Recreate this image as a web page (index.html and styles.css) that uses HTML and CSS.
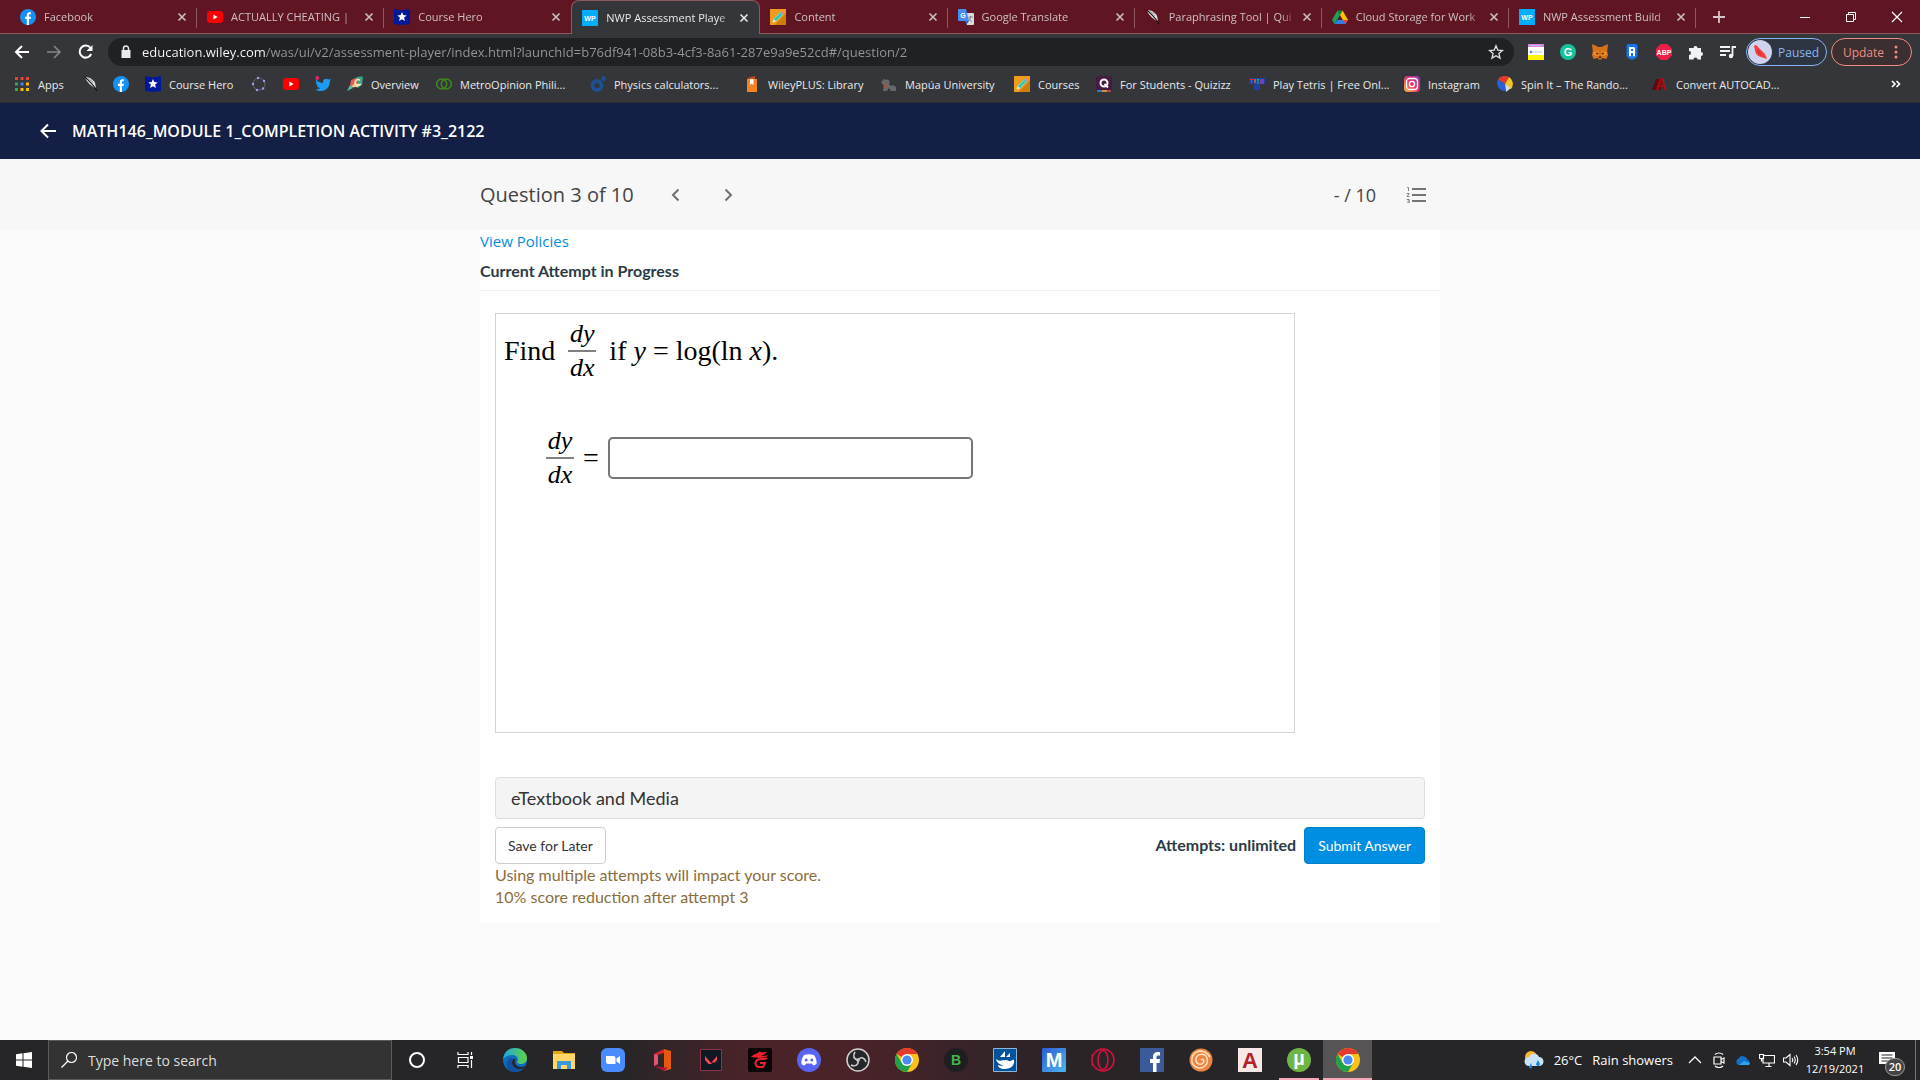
FILE: index.html
```html
<!DOCTYPE html>
<html lang="en">
<head>
  <meta charset="UTF-8">
  <title>NWP Assessment Player</title>
  <link rel="stylesheet" href="styles.css">
</head>
<body>
<svg class="defs" aria-hidden="true">
  <symbol id="fb" viewBox="0 0 16 16"><circle cx="8" cy="8" r="8" fill="#1590f5"/><path d="M6.800 16V10H5V7.800h1.800V6.200C6.800 4.200 7.900 3.200 9.600 3.200c.7 0 1.300.1 1.300.1v1.900h-.9c-.9 0-1.100.5-1.100 1.100v1.500h2L10.600 10H8.900v6z" fill="#fff"/></symbol>
  <symbol id="yt" viewBox="0 0 16 16"><rect y="2" width="16" height="12" rx="3" fill="#f00"/><path d="M6.400 5.600v4.800L10.600 8z" fill="#fff"/></symbol>
  <symbol id="hero" viewBox="0 0 16 16"><path d="M0 0l8 1.500L16 0v15l-8 1-8-1z" fill="#00189a"/><path d="M8 3l1.300 3.100 3.400.3-2.600 2.200.8 3.300L8 10.200l-2.900 1.700.8-3.300-2.600-2.200 3.400-.3z" fill="#fff"/></symbol>
  <symbol id="wp" viewBox="0 0 16 16"><path d="M0 0h16v16H0z" fill="#00aeff"/><text x="8" y="11" class="glyph wp">WP</text></symbol>
  <symbol id="pencil" viewBox="0 0 16 16"><path d="M0 0h16v16H0z" fill="#f29a1c"/><path d="M16 4v12H5z" fill="#cf7d0d"/><path d="M2.500 13.500l1-3.700 7-7 2.700 2.700-7 7z" fill="#58d6c4"/><path d="M4.500 11.500l7-7" stroke="#2aa58f"/><path d="M10.500 2.800l1.200-1.100 2.700 2.600-1.200 1.200z" fill="#f27aa5"/><path d="M2.500 13.500l1-3.500 2.600 2.500z" fill="#ffe6b0"/></symbol>
  <symbol id="translate" viewBox="0 0 16 16"><path d="M6 4h9a1 1 0 0 1 1 1v10a1 1 0 0 1-1 1H9z" fill="#dcdcdc"/><path d="M1 0h7l3 12H1a1 1 0 0 1-1-1V1a1 1 0 0 1 1-1z" fill="#4a8af4"/><path d="M7 12h4l-2.500 3.500z" fill="#2b5fc7"/><text x="5" y="8.500" class="glyph wp">G</text><path d="M10.500 8H15M12.500 7v1c0 2-1 3.500-2 4m0-3c1 2 2 3 3.500 3.500" stroke="#6b7785" fill="none" stroke-width=".8"/></symbol>
  <symbol id="quill" viewBox="0 0 16 16"><path d="M2 1c4 0 8 2 10 6l1 5-2-.5C7 9 3 5 2 1z" fill="#e8e8e8"/><path d="M2 1c4 4 9 8 12 14" stroke="#111" stroke-width="1.200" fill="none"/><path d="M5 2l3 3M8 3l2 4" stroke="#777" stroke-width=".6"/></symbol>
  <symbol id="drive" viewBox="0 0 16 16"><path d="M5.400 1.500h5.200L8 6z" fill="#0a8a3e"/><path d="M5.400 1.500L0 11l2.600 4L8 6z" fill="#12a65a"/><path d="M10.600 1.500L16 11h-5.200L8 6z" fill="#ffc107"/><path d="M5.300 11H16l-2.600 4H2.600z" fill="#2d7ff0"/><path d="M10.800 11H16l-2.600 4z" fill="#ea4335"/></symbol>
  <symbol id="close" viewBox="0 0 16 16"><path d="M4.500 4.500l7 7m0-7l-7 7" stroke="currentColor" stroke-width="1.600"/></symbol>
  <symbol id="chrome" viewBox="0 0 24 24"><circle cx="12" cy="12" r="12" fill="#fbc116"/><path d="M12 12L1.600 6A12 12 0 0 1 22.400 6H12z" fill="#e33b2e"/><path d="M1.600 6A12 12 0 0 0 12 24l5.200-9L12 12 6.800 15z" fill="#1fa04b"/><circle cx="12" cy="12" r="6" fill="#fff"/><circle cx="12" cy="12" r="4.600" fill="#4a8af4"/></symbol>
</svg>

<header class="browser">
  <div class="tabstrip">
    <div class="tab"><svg><use href="#fb"/></svg><span>Facebook</span><button aria-label="Close"><svg><use href="#close"/></svg></button></div>
    <div class="tab"><svg><use href="#yt"/></svg><span>ACTUALLY CHEATING |</span><button aria-label="Close"><svg><use href="#close"/></svg></button></div>
    <div class="tab"><svg><use href="#hero"/></svg><span>Course Hero</span><button aria-label="Close"><svg><use href="#close"/></svg></button></div>
    <div class="tab active"><svg><use href="#wp"/></svg><span>NWP Assessment Playe</span><button aria-label="Close"><svg><use href="#close"/></svg></button></div>
    <div class="tab"><svg><use href="#pencil"/></svg><span>Content</span><button aria-label="Close"><svg><use href="#close"/></svg></button></div>
    <div class="tab"><svg><use href="#translate"/></svg><span>Google Translate</span><button aria-label="Close"><svg><use href="#close"/></svg></button></div>
    <div class="tab"><svg><use href="#quill"/></svg><span>Paraphrasing Tool | Qui</span><button aria-label="Close"><svg><use href="#close"/></svg></button></div>
    <div class="tab"><svg><use href="#drive"/></svg><span>Cloud Storage for Work</span><button aria-label="Close"><svg><use href="#close"/></svg></button></div>
    <div class="tab"><svg><use href="#wp"/></svg><span>NWP Assessment Build</span><button aria-label="Close"><svg><use href="#close"/></svg></button></div>
    <div class="window-buttons">
      <button aria-label="New tab"><svg viewBox="0 0 16 16"><path d="M8 2v12M2 8h12" stroke="#d5c5c8" stroke-width="1.800"/></svg></button>
      <button aria-label="Minimize"><svg viewBox="0 0 16 16"><path d="M3 8.500h10" stroke="#fff"/></svg></button>
      <button aria-label="Restore"><svg viewBox="0 0 16 16"><path d="M3.500 5.500h7v7h-7zM5.500 5V3.500h7v7H11" fill="none" stroke="#fff"/></svg></button>
      <button aria-label="Close window"><svg viewBox="0 0 16 16"><path d="M3 3l10 10M13 3L3 13" stroke="#fff" stroke-width="1.200"/></svg></button>
    </div>
  </div>

  <div class="toolbar">
    <nav class="history">
      <button aria-label="Back"><svg viewBox="0 0 16 16"><path d="M15 8H2M8 2L2 8l6 6" fill="none" stroke="#fff" stroke-width="2"/></svg></button>
      <button aria-label="Forward"><svg viewBox="0 0 16 16"><path d="M1 8h13M8 2l6 6-6 6" fill="none" stroke="#85868a" stroke-width="1.600"/></svg></button>
      <button aria-label="Reload"><svg viewBox="0 0 16 16"><path d="M13.200 10A6 6 0 1 1 12.500 4" fill="none" stroke="#fff" stroke-width="2"/><path d="M14.500 1v6h-6z" fill="#fff"/></svg></button>
    </nav>
    <div class="omnibox">
      <svg class="lock" viewBox="0 0 16 16"><path d="M3.500 6h9v8h-9z" fill="#e8eaed"/><path d="M5.500 6V4.500a2.500 2.500 0 0 1 5 0V6" fill="none" stroke="#e8eaed" stroke-width="1.500"/></svg>
      <input type="text" aria-label="Address" value="education.wiley.com/was/ui/v2/assessment-player/index.html?launchId=b76df941-08b3-4cf3-8a61-287e9a9e52cd#/question/2">
      <button aria-label="Bookmark"><svg viewBox="0 0 16 16"><path d="M8 1.800l1.800 4.300 4.600.4-3.500 3 1.100 4.600L8 11.700l-4 2.400 1.100-4.600-3.500-3 4.600-.4z" fill="none" stroke="#dfe1e5" stroke-width="1.300"/></svg></button>
    </div>
    <div class="extensions">
      <button aria-label="Notes"><svg viewBox="0 0 16 16"><path d="M0 0h16v4H0z" fill="#d883dc"/><path d="M0 3h16v8H0z" fill="#fff"/><path d="M0 11h16v5H0z" fill="#fbf600"/><path d="M2 1.500h11M5 8h9" stroke="#b9c6e8"/><circle cx="3" cy="8" r="1.300" fill="#5a86dc"/></svg></button>
      <button aria-label="Grammarly"><svg viewBox="0 0 16 16"><circle cx="8" cy="8" r="8" fill="#15c39a"/><text x="8" y="12" class="glyph g">G</text></svg></button>
      <button aria-label="MetaMask"><svg viewBox="0 0 16 16"><path d="M0 0l6.500 3h3L16 0l-.8 7.500L16 11l-1.600 4-3.900-1-1.500 1.500H7L5.500 14l-3.900 1L0 11l.8-3.500z" fill="#d9731a"/><path d="M1 8l5-1 1 5-5.500-1zm14 0l-5-1-1 5 5.500-1z" fill="#f08a2c"/><path d="M4.500 8.500l2 1-.5 1-2-.5zm7 0l-2 1 .5 1 2-.5zM6.500 12.500h3L9 14H7z" fill="#3b2513"/></svg></button>
      <button aria-label="Ronin"><svg viewBox="0 0 16 16"><path d="M4 0h8l1.500 1.500v10C13.500 13.500 10 15 8 16c-2-1-5.500-2.500-5.500-4.500v-10z" fill="#1573f0"/><path d="M5 3h5l1 1v8l-2 .5V9H7v3.500L5 12zM7 5v2h2V5z" fill="#fff" fill-rule="evenodd"/></svg></button>
      <button aria-label="Adblock Plus"><svg viewBox="0 0 16 16"><path d="M4.700 0h6.600L16 4.700v6.600L11.300 16H4.700L0 11.300V4.700z" fill="#ed1e45"/><text x="8" y="10.500" class="glyph wp">ABP</text></svg></button>
      <button aria-label="Extensions"><svg viewBox="0 0 16 16"><path d="M1 4h4.500a2 2 0 1 1 4 0H13v4a2 2 0 1 1 0 4v3.500H9.500a2 2 0 0 0-4 0H1V11a2 2 0 0 0 0-4z" fill="#f1f3f4"/></svg></button>
      <button aria-label="Media"><svg viewBox="0 0 16 16"><path d="M0 3h10M0 7h10M0 11h6M12.500 12V3H16" fill="none" stroke="#f1f3f4" stroke-width="1.800"/><circle cx="11" cy="12" r="2.200" fill="#f1f3f4"/></svg></button>
    </div>
    <button class="pill paused"><svg viewBox="0 0 24 24"><circle cx="12" cy="12" r="12" fill="#cfd3ee"/><path d="M6 6c1-1 3-1 4 1l7 7 2 5-6-2c-4-1-6-4-6-7z" fill="#f3403f"/><path d="M9 9l6 7-5-3z" fill="#c72f3d"/></svg>Paused</button>
    <button class="pill update">Update<svg viewBox="0 0 16 16"><g fill="#f28b82"><circle cx="8" cy="3" r="1.500"/><circle cx="8" cy="8" r="1.500"/><circle cx="8" cy="13" r="1.500"/></g></svg></button>
  </div>

  <nav class="bookmarks">
    <a href="#"><svg viewBox="0 0 16 16"><path d="M1 1h3v3H1zm5.500 0h3v3h-3zM12 1h3v3h-3z" fill="#ea4335"/><path d="M1 6.500h3v3H1zM1 12h3v3H1z" fill="#34a853"/><path d="M6.500 6.500h3v3h-3z" fill="#4285f4"/><path d="M12 6.500h3v3h-3zM6.500 12h3v3h-3zM12 12h3v3h-3z" fill="#fbbc05"/></svg>Apps</a>
    <a href="#" aria-label="QuillBot"><svg><use href="#quill"/></svg></a>
    <a href="#" aria-label="Facebook"><svg><use href="#fb"/></svg></a>
    <a href="#"><svg><use href="#hero"/></svg>Course Hero</a>
    <a href="#" aria-label="GeoGebra"><svg viewBox="0 0 16 16"><circle cx="8" cy="8" r="6" fill="none" stroke="#666" stroke-width="1"/><g fill="#9a9aff"><circle cx="7" cy="2" r="1.200"/><circle cx="13" cy="5" r="1.200"/><circle cx="12" cy="12.500" r="1.200"/><circle cx="6" cy="14" r="1.200"/><circle cx="2" cy="8" r="1.200"/></g></svg></a>
    <a href="#" aria-label="YouTube"><svg><use href="#yt"/></svg></a>
    <a href="#" aria-label="Twitter"><svg viewBox="0 0 16 16"><path d="M1 3.500c2 2.300 4.200 3.300 7 3.500-.4-2.500 1-4.300 3.200-4.300 1 0 1.700.3 2.300.9L16 3l-1.100 2C15 10.500 11.500 15 6 15c-2.200 0-4-.5-5.500-1.600 2 .1 3.600-.3 4.600-1.300-1.600-.2-2.700-1-3.100-2.300h1.300C1.700 9 .9 8 1 6.200l1.300.4C1 5.600.5 4.800 1 3.500z" fill="#1d9bf0"/><circle cx="2.200" cy="2" r="2" fill="#f02070"/></svg></a>
    <a href="#"><svg viewBox="0 0 16 16"><path d="M7 3c2-2 6-3 9-2l-1 8-4 3-5-2z" fill="#3ba386"/><path d="M3 10l1-6 5-2 2 4-4 6z" fill="#e95c50"/><path d="M0 15l3-6 3 3z" fill="#4cc0a0"/><path d="M4 11l4-4 3 4z" fill="#f0cf8d"/><path d="M13 4.500a2.800 2.800 0 1 0 0 4H10.500" fill="none" stroke="#ffe9b8" stroke-width="1.500"/></svg>Overview</a>
    <a href="#"><svg viewBox="0 0 16 16"><g fill="none" stroke="#3f8a1c" stroke-width="1.500"><circle cx="5.700" cy="8" r="5"/><circle cx="10.300" cy="8" r="5"/></g></svg>MetroOpinion Phili...</a>
    <a href="#"><svg viewBox="0 0 16 16"><circle cx="7" cy="9.500" r="4.500" fill="none" stroke="#1d4f91" stroke-width="4"/><circle cx="13.500" cy="2.500" r="2.500" fill="#1d4f91"/></svg>Physics calculators...</a>
    <a href="#"><svg viewBox="0 0 16 16"><path d="M3 3h10v13H3z" fill="#f58220"/><path d="M4 2l7-2v3H4z" fill="#d94a1f"/><path d="M6 3h3.500v6L7.700 7.500 6 9z" fill="#fff"/></svg>WileyPLUS: Library</a>
    <a href="#"><svg viewBox="0 0 16 16"><path d="M0 6l3-3 3 1 1-1 2 3-1 2 2 2 2-1 3 2v4h-5l-2-3-2 3H2l1-5z" fill="#65696b"/><path d="M2 6l2 1-1 5M7 6l-2 6" stroke="#a15842" fill="none"/></svg>Mapúa University</a>
    <a href="#"><svg><use href="#pencil"/></svg>Courses</a>
    <a href="#"><svg viewBox="0 0 16 16"><rect width="16" height="16" rx="3" fill="#461a42"/><circle cx="8" cy="7" r="3.500" fill="none" stroke="#fff" stroke-width="2"/><path d="M8.500 8l3.500 3.500" stroke="#fff" stroke-width="1.800"/><path d="M1 15h5" stroke="#25a0e0" stroke-width="1.500"/><path d="M6 15h5" stroke="#f4c13a" stroke-width="1.500"/><path d="M11 15h4" stroke="#e84a5f" stroke-width="1.500"/></svg>For Students - Quizizz</a>
    <a href="#"><svg viewBox="0 0 16 16"><path d="M0 2h16v6h-5v6H5V8H0z" fill="#22409c"/><path d="M1 3.500h3M2.500 3.500v4" stroke="#f22"/><path d="M5 4h2M5 6h2" stroke="#f90"/><path d="M8 3.500h2M9 4v4" stroke="#2c4"/><path d="M12 3v5M14 3v5" stroke="#b4e"/></svg>Play Tetris | Free Onl...</a>
    <a href="#"><svg viewBox="0 0 16 16"><defs><linearGradient id="ig" x1="0" y1="1" x2="1" y2="0"><stop offset="0" stop-color="#fdc23f"/><stop offset=".5" stop-color="#e9306b"/><stop offset="1" stop-color="#8a3ac8"/></linearGradient></defs><rect width="16" height="16" rx="4" fill="url(#ig)"/><rect x="2.500" y="2.500" width="11" height="11" rx="3" fill="none" stroke="#fff" stroke-width="1.300"/><circle cx="8" cy="8" r="2.600" fill="none" stroke="#fff" stroke-width="1.300"/></svg>Instagram</a>
    <a href="#"><svg viewBox="0 0 16 16"><path d="M8 8L1 3.500A8 8 0 0 1 12 1z" fill="#e33a2f"/><path d="M8 8l4-7a8 8 0 0 1 2 12z" fill="#f5c51d"/><path d="M8 8l6 4-5 4z" fill="#d8dbe0"/><path d="M8 8L1 3.500A8 8 0 0 0 8 15z" fill="#2a61d8"/></svg>Spin It – The Rando...</a>
    <a href="#"><svg viewBox="0 0 16 16"><path d="M0 14L4 3h5v11z" fill="#5c0b10"/><text x="9" y="14" class="glyph cad-small">A</text></svg>Convert AUTOCAD...</a>
    <button class="more" aria-label="More bookmarks"><svg viewBox="0 0 16 16"><path d="M4 5l3 3-3 3M8.500 5l3 3-3 3" fill="none" stroke="#fff" stroke-width="1.600"/></svg></button>
  </nav>
</header>

<div class="course-bar">
  <button aria-label="Back to course"><svg viewBox="0 0 16 16"><path d="M16 8H1.500M8 1.500L1.500 8 8 14.500" fill="none" stroke="#fff" stroke-width="2"/></svg></button>
  <h1>MATH146_MODULE 1_COMPLETION ACTIVITY #3_2122</h1>
</div>

<div class="question-bar">
  <div class="inner">
    <h2>Question 3 of 10</h2>
    <button aria-label="Previous question"><svg viewBox="0 0 16 16"><path d="M10.500 2.500L5 8l5.500 5.500" fill="none" stroke="#707070" stroke-width="2"/></svg></button>
    <button aria-label="Next question"><svg viewBox="0 0 16 16"><path d="M5.500 2.500L11 8l-5.500 5.500" fill="none" stroke="#707070" stroke-width="2"/></svg></button>
    <span class="score">- / 10</span>
    <button class="list" aria-label="Question list"><svg viewBox="0 0 20 16"><path d="M6 2h14M6 8h14M6 14h14" stroke="#757575" stroke-width="2"/><path d="M1 .5h1.500v3.500M.7 6.500h2.500L1 9.500h2.500M.7 12.500h2.500V16H.7M1.500 14.200h1.500" fill="none" stroke="#757575" stroke-width=".9"/></svg></button>
  </div>
</div>

<main>
  <section class="question">
    <a class="policies" href="#">View Policies</a>
    <h3>Current Attempt in Progress</h3>
    <div class="body">
      <div class="problem">
        <div class="math">
          <span>Find</span>
          <span class="frac"><i>dy</i><i>dx</i></span>
          <span>if <i>y</i> = log(ln <i>x</i>).</span>
        </div>
        <div class="math answer">
          <label for="answer"><span class="frac"><i>dy</i><i>dx</i></span> =</label>
          <input type="text" id="answer">
        </div>
      </div>
      <button class="etext">eTextbook and Media</button>
      <div class="actions">
        <button class="save">Save for Later</button>
        <span class="attempts">Attempts: unlimited</span>
        <button class="submit">Submit Answer</button>
      </div>
      <p class="warning">Using multiple attempts will impact your score.<br>10% score reduction after attempt 3</p>
    </div>
  </section>
</main>

<footer class="taskbar">
  <button class="start" aria-label="Start"><svg viewBox="0 0 16 16"><path d="M0 2.200l6.500-.9v6.200H0zM7.500 1.200L16 0v7.500H7.500zM0 8.500h6.500v6.200L0 13.800zM7.500 8.500H16V16l-8.500-1.200z" fill="#fff"/></svg></button>
  <div class="search">
    <svg viewBox="0 0 16 16"><circle cx="10.500" cy="5.500" r="5" fill="none" stroke="#fff" stroke-width="1.200"/><path d="M7 9L.5 15.500" stroke="#fff" stroke-width="1.200"/></svg>
    <input type="text" aria-label="Search" placeholder="Type here to search">
  </div>
  <div class="apps">
    <button aria-label="Cortana"><svg viewBox="0 0 24 24"><circle cx="12" cy="12" r="7" fill="none" stroke="#fff" stroke-width="2"/></svg></button>
    <button aria-label="Task View"><svg viewBox="0 0 24 24"><path d="M4 4v2.500h10V4M4 20v-2.500h10V20M4.500 9.500h9.500v5H4.500zM17.500 4v3M17.500 12v8" fill="none" stroke="#fff" stroke-width="1.200"/><path d="M16 8h3v3h-3z" fill="#fff"/></svg></button>
    <button aria-label="Edge"><svg viewBox="0 0 24 24"><defs><linearGradient id="eg"><stop offset="0" stop-color="#1fa7d8"/><stop offset="1" stop-color="#5fd34a"/></linearGradient></defs><circle cx="12" cy="12" r="12" fill="#0f6cbd"/><path d="M.2 11C1 4 6 0 12 0c7 0 12 5 12 10 0 4-3 6-6.500 6-3 0-4-1.500-3-3C16 10 13 7 9 7c-4 0-7 2-8.800 4z" fill="url(#eg)"/><path d="M10 11c-3 5 1 11 8 10 2 0 3.500-1.500 4-3-4 2-9 1-10-3-.5-1.500 0-3 1-4z" fill="#262527"/><path d="M10 11c-3 5 1 11 8 10-2 2-4 3-7 3C4 23 2 16 5 12c1.500-2 4-3 5-1z" fill="#1450a0"/></svg></button>
    <button aria-label="File Explorer"><svg viewBox="0 0 24 24"><path d="M1 3h9l2 2h11v16H1z" fill="#e8a317"/><path d="M1 6h22v15H1z" fill="#ffd667"/><path d="M5 13h14v8h-4v-4H9v4H5z" fill="#3b98dc"/></svg></button>
    <button aria-label="Zoom"><svg viewBox="0 0 24 24"><rect width="24" height="24" rx="6" fill="#4a8cff"/><path d="M5 8h7.500a2 2 0 0 1 2 2v6H7a2 2 0 0 1-2-2zm10.500 2.500L19 8v8l-3.500-2.500z" fill="#fff"/></svg></button>
    <button aria-label="Office"><svg viewBox="0 0 24 24"><path d="M14 1l7 2v18l-7 2z" fill="#e8590c"/><path d="M14 1v4L8 7v9l-4 2V6z" fill="#d8262c"/><path d="M4 18l10 1.500h4L14 23z" fill="#b5123b"/><path d="M4 6l4 1v9l-4 2z" fill="#e0566c"/></svg></button>
    <button aria-label="Valorant"><svg viewBox="0 0 24 24"><path d="M1.500 1.500h21v21h-21z" fill="#101823" stroke="#8b3443"/><path d="M6 8l7 8h-3.500L6 12zM18 8v4l-2 2.500h-3.500z" fill="#ff4655"/></svg></button>
    <button aria-label="Garena"><svg viewBox="0 0 24 24"><rect width="24" height="24" rx="2" fill="#080606"/><path d="M3 9c2-3 7-3 9-6 0 2 4 1 7 1-2 3-5 4-8 4 3 0 6 0 9-1-3 4-10 3-17 2z" fill="#e8232b"/><path d="M19 10c-2 2-7 0-10 2-3 3-1 7 2 7h4l2-4h-5" fill="none" stroke="#e8232b" stroke-width="2"/></svg></button>
    <button aria-label="Discord"><svg viewBox="0 0 24 24"><circle cx="12" cy="12" r="12" fill="#5865f2"/><path d="M7 7c3-1 7-1 10 0 2 3 3 6 2.500 9-1.500 1-3 1.500-3.500 1.200L15 15.500H9l-1 1.700C7 17.500 5.500 17 4.500 16 4 13 5 10 7 7z" fill="#fff"/><circle cx="9.200" cy="12" r="1.500" fill="#5865f2"/><circle cx="14.800" cy="12" r="1.500" fill="#5865f2"/></svg></button>
    <button aria-label="OBS"><svg viewBox="0 0 24 24"><circle cx="12" cy="12" r="11" fill="#26252a" stroke="#d0d0d0" stroke-width="1.500"/><path d="M12 12c-5-1-5-5-3-8M12 12c3-4 7-2 8 2M12 12c1 5-3 7-7 5" fill="none" stroke="#ccc" stroke-width="1.600"/><circle cx="12" cy="12" r="1.800" fill="#ccc"/></svg></button>
    <button aria-label="Chrome"><svg><use href="#chrome"/></svg></button>
    <button aria-label="BlueStacks"><svg viewBox="0 0 24 24"><circle cx="12" cy="12" r="12" fill="#1e1f20"/><text x="12" y="17" class="glyph green">B</text></svg></button>
    <button aria-label="InstallShield"><svg viewBox="0 0 24 24"><path d="M.5.500h23v23H.5z" fill="#00539b" stroke="#8bb7dd"/><path d="M7 9l5-6v6zM13 9l4-4v4z" fill="#fff"/><path d="M3 11c4 4 9-1 13 2 2 1 3-2 5-1 1 5-3 9-9 9-5 0-7-2-7-4 2 1 4 1 6 0-4 0-7-2-8-6z" fill="#fff"/></svg></button>
    <button aria-label="Mobizen"><svg viewBox="0 0 24 24"><defs><linearGradient id="mg" x2="1" y2="1"><stop stop-color="#2e5bd4"/><stop offset="1" stop-color="#4db7ee"/></linearGradient></defs><rect width="24" height="24" rx="1" fill="url(#mg)"/><text x="12" y="19" class="glyph big">M</text></svg></button>
    <button aria-label="Opera"><svg viewBox="0 0 24 24"><g fill="none" stroke="#d3123e" stroke-width="1.600"><circle cx="12" cy="12" r="11"/><ellipse cx="12" cy="12" rx="5" ry="9.500"/></g><path d="M7 4a8 8 0 0 0 0 16" fill="none" stroke="#8d1b36"/></svg></button>
    <button aria-label="Facebook app"><svg viewBox="0 0 24 24"><path d="M0 0h24v24H0z" fill="#3c5a9a"/><path d="M13 24v-9h-3v-4h3V8.500C13 5.500 15 4 17.500 4H20v3.500h-2c-1 0-1.500.5-1.500 1.500v2H20l-.5 4h-3v9z" fill="#fff"/></svg></button>
    <button aria-label="Spiral"><svg viewBox="0 0 24 24"><circle cx="12" cy="12" r="11.500" fill="#f08542"/><path d="M12 12c2-2 4 1 2 3-3 3-8 0-7-4 1-6 9-6 11-1 2 7-5 12-11 9C0 15 2 4 11 3c5 0 8 3 10 6" fill="none" stroke="#ffe2c7" stroke-width="1.500"/></svg></button>
    <button aria-label="AutoCAD"><svg viewBox="0 0 24 24"><path d="M0 0h24v24H0z" fill="#f7e9e7"/><text x="12" y="20" class="glyph cad">A</text></svg></button>
    <button class="open" aria-label="uTorrent"><svg viewBox="0 0 24 24"><circle cx="12" cy="12" r="12" fill="#6eb544"/><text x="12" y="17" class="glyph big">µ</text></svg></button>
    <button class="current" aria-label="Chrome window"><svg><use href="#chrome"/></svg></button>
  </div>
  <div class="tray">
    <button class="weather"><svg viewBox="0 0 20 18"><circle cx="7" cy="6" r="6" fill="#f7b731"/><path d="M5 15a4.500 4.500 0 0 1 0-9 5.500 5.500 0 0 1 10 0 4.500 4.500 0 0 1 0 9z" fill="#c9e4fa"/><path d="M7 12l-2 4a1.500 1.500 0 0 0 3 0zM14 9l-2 4a2 2 0 0 0 4 0z" fill="#1c85dd"/></svg><span>26°C</span><span>Rain showers</span></button>
    <button aria-label="Show hidden icons"><svg viewBox="0 0 16 16"><path d="M2 11l6-6 6 6" fill="none" stroke="#fff" stroke-width="1.300"/></svg></button>
    <button aria-label="Meet Now"><svg viewBox="0 0 16 16"><path d="M3 5h7v7H3zM10 7.500L13 6v5l-3-1.500M4 2.500c2-2 6-2 8 0M4 14c2 2 6 2 8 0" fill="none" stroke="#fff" stroke-width="1.200"/></svg></button>
    <button aria-label="OneDrive"><svg viewBox="0 0 16 16"><path d="M3.500 13a3.500 3.500 0 0 1 0-6.500 5 5 0 0 1 9 1 3 3 0 0 1 .5 5.500z" fill="#1270c8"/><path d="M4 13l5-4 6 2c0 1.500-1 2-2 2z" fill="#29a7ea"/></svg></button>
    <button aria-label="Network"><svg viewBox="0 0 16 16"><path d="M5 3.500h10.500v7.500H4V7M10 11v3M6.500 14.500h6M.5 2.500h4v4h-4zM2.500 6.500v3" fill="none" stroke="#fff" stroke-width="1.200"/></svg></button>
    <button aria-label="Volume"><svg viewBox="0 0 16 16"><path d="M.5 6H3l4-3.500v11L3 10H.5zM9 6q1.500 2 0 4M11 4.500q2.500 3.500 0 7M13 3q3.500 5 0 10" fill="none" stroke="#fff" stroke-width="1.100"/></svg></button>
    <div class="clock"><span>3:54 PM</span><span>12/19/2021</span></div>
    <button class="notify" aria-label="20 notifications"><svg viewBox="0 0 16 16"><path d="M0 0h16v12h-6l-3 4v-4H0z" fill="#fff"/><path d="M2.500 3h11M2.500 6h11M2.500 9h7" stroke="#262527"/></svg><span class="badge">20</span></button>
  </div>
</footer>
</body>
</html>
```
FILE: styles.css
```css
* { box-sizing: border-box; }
body { margin: 0; min-height: 100vh; display: flex; flex-direction: column; font-family: "Open Sans", sans-serif; background: #fafafa; }
button { border: none; background: none; padding: 0; margin: 0; font-family: inherit; color: inherit; display: flex; align-items: center; justify-content: center; cursor: pointer; }
input { border: none; background: none; padding: 0; font-family: inherit; outline: none; }
a { text-decoration: none; }
svg { width: 16px; height: 16px; flex: none; }
.defs { position: absolute; width: 0; height: 0; }

/* lettering inside icons */
.glyph { font-family: "Liberation Sans", sans-serif; font-weight: bold; fill: #fff; text-anchor: middle; }
.wp { font-size: 7px; }
.g { font-size: 11px; }
.big { font-size: 20px; }
.green { font-size: 14px; fill: #43b649; }
.cad { font-size: 22px; fill: #b5202a; }
.cad-small { font-size: 16px; fill: #a50b12; }

/* browser chrome */
.browser { background: #35363a; font-size: 11px; color: #e8eaed; border-bottom: 1px solid #2b2c2f; }
.tabstrip { display: flex; height: 34px; padding-left: 10px; background: #5f1622; border-bottom: 1px solid #8c5961; }
.tab { flex: 1; min-width: 0; display: flex; align-items: center; gap: 8px; padding: 0 7px 0 10px; color: #cdbfc3; background: linear-gradient(#8c5961, #8c5961) right 8px / 1px 20px no-repeat; }
.tab span { flex: 1; overflow: hidden; white-space: nowrap; mask-image: linear-gradient(to left, transparent, #000 16px); }
.tab button { margin-left: -6px; }
.tab:nth-child(3) { background: none; }
.tab.active { background: #35363a; color: #e8eaed; border: 1px solid #8c5961; border-bottom: none; border-radius: 8px 8px 0 0; margin-bottom: -1px; }
.window-buttons { width: 224px; display: flex; align-items: center; }
.window-buttons button { width: 46px; height: 28px; }
.window-buttons button:nth-child(2) { margin-left: 40px; }
.toolbar { display: flex; align-items: center; padding: 4px 8px 4px 6px; height: 36px; }
.history { width: 102px; display: flex; }
.history button { width: 32px; }
.omnibox { flex: 1; height: 28px; border-radius: 14px; background: #202124; display: flex; align-items: center; padding: 0 10px; gap: 8px; }
.omnibox input { flex: 1; font-size: 13px; color: transparent; background: linear-gradient(to right, #fff 124px, #96989b 124px); background-clip: text; -webkit-background-clip: text; }
.extensions { display: flex; padding: 0 2px 0 6px; }
.extensions button { width: 32px; }
.pill { height: 28px; border-radius: 14px; border: 1px solid; font-size: 12px; width: 81px; }
.paused { color: #8ab4f8; background: #2c3541; justify-content: flex-start; gap: 6px; padding-left: 1px; margin-right: 4px; }
.paused svg { width: 24px; height: 24px; }
.update { color: #f28b82; background: #3b2f31; gap: 4px; padding-left: 4px; }
.bookmarks { height: 32px; padding: 0 8px 4px 14px; display: grid; align-items: center; white-space: nowrap;
  grid-template-columns: 69px 30px 32px 106px 32px 32px 32px 89px 154px 154px 137px 133px 82px 153px 155px 93px 155px 1fr 32px; }
.bookmarks a { display: flex; align-items: center; gap: 8px; color: #e8eaed; }

/* course header */
.course-bar { height: 56px; background: #141f45; display: flex; align-items: center; gap: 16px; padding-left: 40px; color: #fff; }
.course-bar h1 { font-size: 16px; font-weight: 600; margin: 0; }
.question-bar { background: #f7f7f7; }
.inner { width: 50%; height: 71px; margin: 0 auto; display: flex; align-items: center; color: #444; }
.inner h2 { font-size: 20px; font-weight: 400; margin: 0 16px 0 0; }
.inner button { width: 52px; height: 40px; }
.score { margin-left: auto; font-size: 18px; }
.inner .list { width: 20px; margin: 0 14px 0 30px; }
.list svg { width: 20px; }

/* question */
main { flex: 1; font-family: Lato, sans-serif; }
.question { width: 50%; margin: 0 auto; background: #fff; padding-bottom: 15px; }
.policies { display: block; font-family: "Open Sans", sans-serif; font-size: 15px; line-height: 22px; color: #008ee3; }
.question h3 { margin: 8px 0 0; padding-bottom: 8px; font-size: 16px; line-height: 22px; font-weight: 700; color: #2c3a46; border-bottom: 1px solid #eee; }
.body { padding: 22px 15px 0; }
.problem { max-width: 800px; min-height: 420px; border: 1px solid #d3d3d3; padding: 4px 8px; }
.math { display: flex; align-items: center; gap: 13px; font-family: "Liberation Serif", serif; font-size: 28px; color: #000; }
.frac { display: inline-flex; flex-direction: column; align-items: center; font-size: 26px; line-height: 32px; width: 28px; }
.frac i:first-child { border-bottom: 2px solid #808080; width: 100%; text-align: center; }
.answer { margin: 41px 0 0 42px; gap: 9px; }
.answer label { display: flex; align-items: center; gap: 9px; }
.answer input { width: 365px; height: 42px; border: 2px solid #767676; border-radius: 5px; background: #fff; padding: 0 8px; font-size: 20px; }
.etext { width: 100%; height: 42px; margin: 44px 0 8px; padding-left: 15px; justify-content: flex-start; background: #f4f4f4; border: 1px solid #ddd; border-radius: 4px; font-size: 18px; color: #333; }
.actions { display: flex; align-items: center; }
.actions button { height: 37px; padding: 0 13px; border-radius: 4px; font-size: 14px; }
.actions .save { padding: 0 12px; border: 1px solid #ccc; color: #333; background: #fff; }
.attempts { margin-left: auto; margin-right: 8px; padding-bottom: 3px; font-size: 16px; font-weight: 700; color: #2c3a46; }
.submit { border: 1px solid #007fcb; background: #008ee3; color: #fff; }
.warning { margin: 0; font-size: 16px; line-height: 22px; color: #8a6d3b; }

/* taskbar */
.taskbar { height: 40px; display: flex; color: #fff; background: linear-gradient(to right, #262527 0, #262527 620px, #4a2329 750px, #4a2329 850px, #2c2427 1050px, #262527 1250px); }
.start { width: 48px; }
.search { width: 344px; border: 1px solid #5c5c5c; background: #333; display: flex; align-items: center; gap: 11px; padding-left: 12px; }
.search input { flex: 1; font-size: 14px; color: #fff; }
.search input::placeholder { color: #ddd; opacity: 1; }
.apps { display: flex; }
.apps button { width: 49px; }
.apps svg { width: 24px; height: 24px; }
.apps .open { background: linear-gradient(#f7a8b8, #f7a8b8) center bottom / 40px 2px no-repeat; }
.apps .current { background: #575455; border-bottom: 2px solid #f7a8b8; border-top: 2px solid #575455; }
.tray { margin-left: auto; display: flex; align-items: center; padding-right: 4px; }
.tray > button { width: 24px; height: 40px; }
.tray .weather { width: auto; gap: 10px; font-size: 13px; margin-right: 10px; }
.weather svg { width: 20px; height: 18px; }
.clock { width: 64px; margin-right: 4px; display: flex; flex-direction: column; align-items: center; font-size: 11px; line-height: 18px; }
.tray .notify { position: relative; width: 45px; border-right: 1px solid #777; padding-right: 12px; }
.badge { position: absolute; left: 14px; top: 18px; width: 20px; height: 18px; border-radius: 9px; border: 1px solid #999; background: #444; font-size: 11px; line-height: 15px; font-weight: 600; text-align: center; }
```
